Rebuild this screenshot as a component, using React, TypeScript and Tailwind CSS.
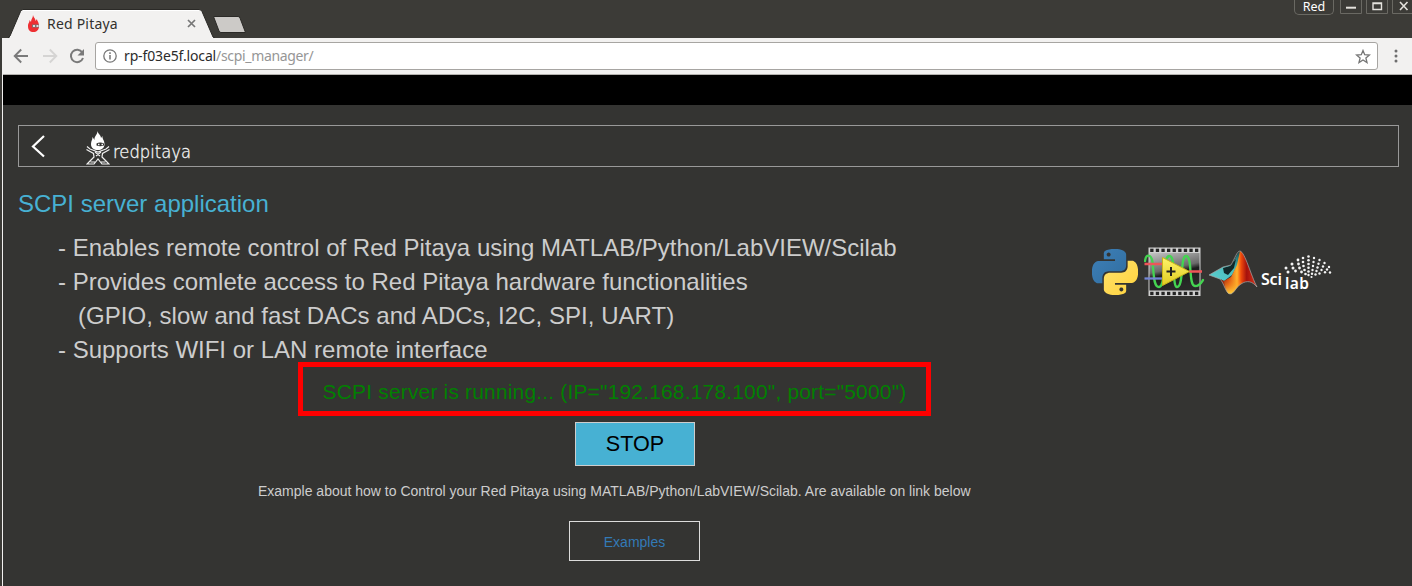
import React from "react";

const PY =
  "M14.25.18l.9.2.73.26.59.3.45.32.34.34.25.34.16.33.1.3.04.26.02.2-.01.13V8.5l-.05.63-.13.55-.21.46-.26.38-.3.31-.33.25-.35.19-.35.14-.33.1-.3.07-.26.04-.21.02H8.77l-.69.05-.59.14-.5.22-.41.27-.33.32-.27.35-.2.36-.15.37-.1.35-.07.32-.04.27-.02.21v3.06H3.17l-.21-.03-.28-.07-.32-.12-.35-.18-.36-.26-.36-.36-.35-.46-.32-.59-.28-.73-.21-.88-.14-1.05-.05-1.23.06-1.22.16-1.04.24-.87.32-.71.36-.57.4-.44.42-.33.42-.24.4-.16.36-.1.32-.05.24-.01h.16l.06.01h8.16v-.83H6.18l-.01-2.75-.02-.37.05-.34.11-.31.17-.28.25-.26.31-.23.38-.2.44-.18.51-.15.58-.12.64-.1.71-.06.77-.04.84-.02 1.27.05zm-6.3 1.98l-.23.33-.08.41.08.41.23.34.33.22.41.09.41-.09.33-.22.23-.34.08-.41-.08-.41-.23-.33-.33-.22-.41-.09-.41.09z";

function PythonLogo() {
  return (
    <svg className="mt-[2px] h-[46px] w-[46px] shrink-0" viewBox="0 0 24 24">
      <defs>
        <linearGradient id="pyb" x1="0" y1="0" x2="1" y2="1">
          <stop offset="0" stopColor="#3e80b8" />
          <stop offset="1" stopColor="#306d9f" />
        </linearGradient>
        <linearGradient id="pyy" x1="1" y1="1" x2="0" y2="0">
          <stop offset="0" stopColor="#ffe26c" />
          <stop offset="1" stopColor="#ffd23c" />
        </linearGradient>
      </defs>
      <path d={PY} fill="url(#pyb)" />
      <path d={PY} fill="url(#pyy)" transform="rotate(180 12 12)" />
    </svg>
  );
}

const HOLES = [0, 1, 2, 3, 4, 5, 6, 7, 8];

function LabviewLogo() {
  return (
    <svg className="ml-[6px] h-[50px] w-[61px] shrink-0" viewBox="0 0 61 50">
      <defs>
        <linearGradient id="film" x1="0" y1="0" x2="0.3" y2="1">
          <stop offset="0" stopColor="#c4c4c4" />
          <stop offset="0.5" stopColor="#6a6a6a" />
          <stop offset="0.62" stopColor="#1d1d1d" />
          <stop offset="1" stopColor="#292929" />
        </linearGradient>
        <linearGradient id="tri" x1="0" y1="0" x2="0" y2="1">
          <stop offset="0" stopColor="#fff36a" />
          <stop offset="1" stopColor="#e0cc20" />
        </linearGradient>
      </defs>
      <rect x="4.5" y="0.5" width="52" height="48.5" fill="#cfcfcf" />
      <rect x="5.5" y="6" width="50" height="37.5" fill="url(#film)" />
      {HOLES.map((i) => (
        <g key={i} fill="#242424">
          <rect x={6.2 + i * 5.6} y="1.7" width="3.3" height="3.3" />
          <rect x={6.2 + i * 5.6} y="44.8" width="3.3" height="3.3" />
        </g>
      ))}
      <path
        d="M1 14C2 7 7 6.500 8.500 15C10 25 9 40 15 40C22 40 18 9 25.500 9C32 9 28 40 33 40C40 40 36 9 42 9C49 9 44 39 51 39C56 39 57 36 59 33"
        fill="none"
        stroke="#44d451"
        strokeWidth="2.3"
        strokeLinecap="round"
      />
      <path d="M0.500 17H20M45 24.500H58" stroke="#ee5558" strokeWidth="2.3" />
      <path d="M0.500 31.500H19" stroke="#7385d4" strokeWidth="2.300" />
      <path d="M18.500 10.500L45.500 24.500L18.500 38.500Z" fill="url(#tri)" stroke="#c9b51a" />
      <path d="M22.500 24.500h9M27 20v9" stroke="#222" strokeWidth="2" />
    </svg>
  );
}

function MatlabLogo() {
  return (
    <svg className="ml-[3px] mt-[3px] h-[45px] w-[50px] shrink-0" viewBox="0 0 50 45">
      <defs>
        <linearGradient id="mw" x1="0" x2="1" y1="0" y2="0">
          <stop offset="0" stopColor="#711712" />
          <stop offset="0.22" stopColor="#d84a10" />
          <stop offset="0.46" stopColor="#ffb32c" />
          <stop offset="0.57" stopColor="#ef4b0c" />
          <stop offset="0.72" stopColor="#a5110c" />
          <stop offset="1" stopColor="#dc3518" />
        </linearGradient>
        <linearGradient id="my" x1="0" x2="0" y1="0" y2="1">
          <stop offset="0.3" stopColor="#ff8a1a" stopOpacity="0" />
          <stop offset="1" stopColor="#ffd43a" />
        </linearGradient>
        <linearGradient id="mt" x1="0" x2="1" y1="1" y2="0">
          <stop offset="0" stopColor="#5bd0d0" />
          <stop offset="0.6" stopColor="#49bcbc" />
          <stop offset="1" stopColor="#164c4e" />
        </linearGradient>
      </defs>
      <path d="M1 25L15 17L24 15L29 5L32 1L31 13L24 25L16 31L12 29Z" fill="url(#mt)" />
      <path d="M15 18L22 16L28 9L26 18L20 25L16 23Z" fill="#122829" />
      <path d="M12 29L16 31L23 27L29 15L32 1C37 2 43 26 49 37C44 31 39 30 33 34C28 37 26 44 22 44C18 44 16 33 12 29Z" fill="url(#mw)" />
      <path d="M16 31L24 26L29 22L34 33C28 37 26 44 22 44C18 44 17 36 16 31Z" fill="url(#my)" />
      <path d="M1 25L15 17L23 15C27 8 29 1 32 1C37 2 43 26 49 37C44 31 39 30 33 34C28 37 26 44 22 44C18 44 16 33 12 29Z" fill="none" stroke="#a8a8a8" strokeWidth="0.7" />
    </svg>
  );
}

const DOTS: number[][] = [
  [25, 13, 1.5], [27, 17, 1.5], [31, 9, 1.5], [32, 13, 1.5], [34.5, 16, 1.4],
  [37, 5, 1.4], [37.5, 9, 1.4], [38.5, 13, 1.4], [40.5, 17, 1.4],
  [42, 3, 1.3], [42, 7, 1.3], [42.5, 11, 1.3], [43.5, 15, 1.3], [44.5, 19, 1.3],
  [47.5, 1.5, 1.3], [47.5, 5.2, 1.3], [47.5, 9, 1.3], [47.5, 12.8, 1.3], [47.5, 16.5, 1.3], [47.5, 20, 1.2],
  [53, 3, 1.2], [52.5, 7, 1.2], [52, 11, 1.2], [51.5, 15, 1.2], [51, 18.8, 1.2], [50.5, 22, 1.1],
  [58.5, 5, 1.2], [57.5, 8.8, 1.2], [56.5, 12.5, 1.2], [55.5, 16, 1.2], [54.5, 19.5, 1.2],
  [63.5, 8, 1.2], [62, 11.5, 1.2], [60.5, 15, 1.2], [58.5, 18.5, 1.2],
  [68, 12, 1.2], [66, 14.5, 1.2], [69, 17.5, 1.2], [64, 17.3, 1.2],
];

function ScilabLogo() {
  return (
    <svg className="ml-[3px] mt-[8px] h-[38px] w-[72px] shrink-0 overflow-visible" viewBox="0 0 72 38">
      {DOTS.map(([x, y, r], i) => (
        <circle key={i} cx={x} cy={y} r={r} fill="#f4f4f4" />
      ))}
      <g fill="#fff" fontFamily="Noto Sans, sans-serif" fontWeight="600" fontSize="16">
        <text x="0" y="30" textLength="21" lengthAdjust="spacing">Sci</text>
        <text x="24" y="34" textLength="24" lengthAdjust="spacing" fontSize="15.5">lab</text>
      </g>
    </svg>
  );
}

function Mascot() {
  return (
    <svg className="h-[34px] w-[24px] shrink-0" viewBox="0 0 24 34">
      <path d="M11.500 0C12 3 15 4 15 7L16.500 5C16 8 18.500 9 18.500 13C18.500 17 15.500 19 12 19C8 19 5 17 5 13C5 10 6.500 9 6.500 6L8.500 9C8 5 11.500 4 11.500 0Z" fill="#fff" />
      <path d="M10.500 12.500Q14 10.500 18 12.500V14.500Q14 16 10.500 14.500Z" fill="#343432" />
      <path d="M12 13.500h1.500M15.500 13.500h1.500" stroke="#fff" strokeWidth="1.300" />
      <path
        d="M1 15.500L4 18L8 19.500L12 21L16 19.500L20 18L23 15.500M0.500 18.500L4 20.500L7.500 22.500L8 26L5 29L1 33H8L12 28L16 33H23L19 29L16 26L16.500 22.500L20 20.500L23.500 18.500M9 21L14 25M15 21L10 25M4.500 31H9M15 31H19.500"
        fill="none"
        stroke="#f0f0f0"
        strokeWidth="1.200"
      />
    </svg>
  );
}

function TabStrip() {
  return (
    <div className="flex h-[38px] items-start bg-[#3c3b37]">
      <div className="relative mt-[9px] ml-[8px] h-[29px] w-[207px]">
        <svg className="absolute inset-0 h-[29px] w-[207px]" viewBox="0 0 207 29">
          <path d="M0 29L2 27L12.500 2.500Q13.500 0.500 15 0.500H191Q193 0.500 194 2.500L205 28L207 29Z" fill="#f2f1f0" stroke="#2b2a27" />
          <path d="M2 28.500H205" stroke="#f2f1f0" />
          <path d="M15 1.500H191" stroke="#fff" />
        </svg>
        <div className="relative flex h-[29px] items-center pl-[19px]">
          <svg className="h-[17px] w-[13px]" viewBox="0 0 13 17">
            <path d="M6 0C6 2 8.500 3 8.500 6L10 4C10 6 12 7 12 11C12 15 9.500 17 6.500 17C3 17 1 15 1 11C1 8 2.500 8 2.500 5L4 7C4 4 6 3 6 0Z" fill="#ee3033" />
            <path d="M5 9.500H12V12.500H5Z" fill="#777" />
            <path d="M6 11h2M9.500 11h2" stroke="#fff" strokeWidth="1.600" />
          </svg>
          <span className="ml-[7px] w-[135px] font-['Noto_Sans',sans-serif] text-[14px] tracking-[0.2px] text-[#33312e]">Red Pitaya</span>
          <svg className="ml-[5px] h-[9px] w-[9px]" viewBox="0 0 9 9">
            <path d="M1 1L8 8M8 1L1 8" stroke="#777" strokeWidth="1.700" />
          </svg>
        </div>
      </div>
      <svg className="mt-[16px] -ml-[3px] h-[17px] w-[34px]" viewBox="0 0 34 17">
        <path d="M1.500 0.500H26Q27.500 0.500 28 2L33.500 16.500H9Q7.500 16.500 7 15Z" fill="#cccac7" stroke="#2b2a27" />
      </svg>
      <div className="ml-auto flex">
        <div className="h-[15px] w-[40px] rounded-b-[5px] border border-t-0 border-[#6a6963] text-center font-['Noto_Sans',sans-serif] text-[12.5px] leading-[14px] text-white">
          Red
        </div>
        <svg className="ml-[6px] h-[15px] w-[72px]" viewBox="0 0 72 15">
          <path d="M0.500 0V13.500H21.500V0M26.500 0V13.500H47.500V0M52.500 0V13.500H72" fill="none" stroke="#6a6963" />
          <path d="M6 7.700H16" stroke="#e4e2dd" strokeWidth="2" />
          <path d="M33 3H41.500V9.500H33ZM33 3.500H41.500" fill="none" stroke="#e4e2dd" strokeWidth="1.400" />
          <path d="M60 2L67.500 10M67.500 2L60 10" stroke="#e4e2dd" strokeWidth="1.600" />
        </svg>
      </div>
    </div>
  );
}

function Toolbar() {
  return (
    <div className="flex h-[37px] items-center border-b border-[#b3b1ae] bg-[#f2f1f0] pl-[10px]">
      <svg className="h-[16px] w-[16px]" viewBox="0 0 16 16" fill="none" stroke="#7a7a7a" strokeWidth="1.900">
        <path d="M15 8H2M8.200 1.500L1.700 8L8.200 14.500" />
      </svg>
      <svg className="ml-[13px] h-[16px] w-[16px]" viewBox="0 0 16 16" fill="none" stroke="#d5d4d3" strokeWidth="1.900">
        <path d="M1 8H14M7.800 1.500L14.300 8L7.800 14.500" />
      </svg>
      <svg className="ml-[11px] h-[16px] w-[16px]" viewBox="0 0 16 16">
        <path d="M13.300 4.500A6.200 6.200 0 1 0 14 10" fill="none" stroke="#7a7a7a" strokeWidth="2" />
        <path d="M15 1V7.500H8.500Z" fill="#7a7a7a" />
      </svg>
      <div className="ml-[10px] flex h-[28px] w-[1283px] items-center rounded-[3px] border border-[#a7a5a2] bg-white pr-[6px] pl-[7px] font-['Noto_Sans',sans-serif] text-[14px]">
        <svg className="mr-[7px] h-[14px] w-[14px]" viewBox="0 0 14 14" fill="none" stroke="#777">
          <circle cx="7" cy="7" r="6.200" strokeWidth="1.300" />
          <path d="M7 6V10.500M7 3.300V5" strokeWidth="1.500" />
        </svg>
        <span className="-mt-[1px] tracking-[-0.14px] text-[#2c2c2c]">rp-f03e5f.local</span>
        <span className="-mt-[1px] tracking-[-0.34px] text-[#969696]">/scpi_manager/</span>
        <svg className="ml-auto h-[15px] w-[16px]" viewBox="0 0 16 15">
          <path d="M8 1.500L9.700 5.700L14.500 6L10.900 9L12 13.500L8 11L4 13.500L5.100 9L1.500 6L6.300 5.700Z" fill="none" stroke="#757575" strokeWidth="1.300" />
        </svg>
      </div>
      <svg className="ml-[16px] h-[14px] w-[4px]" viewBox="0 0 4 14" fill="#6e6e6e">
        <circle cx="2" cy="2" r="1.500" />
        <circle cx="2" cy="7" r="1.500" />
        <circle cx="2" cy="12" r="1.500" />
      </svg>
    </div>
  );
}

export default function App() {
  return (
    <div className="flex h-[586px] w-[1412px] flex-col overflow-hidden bg-[#3c3b37] font-['Liberation_Sans',sans-serif]">
      <TabStrip />
      <div className="ml-[2px] flex-1 border-l border-[#f2f1f0] bg-[#343432]">
        <Toolbar />
        <div className="h-[30px] bg-black" />
        <main className="pt-[20px] pr-[13px] pl-[15px]">
          <header className="flex h-[42px] items-start border border-[#999]">
            <svg className="mt-[9px] ml-[12px] h-[23px] w-[15px]" viewBox="0 0 15 23">
              <path d="M13 1L2 11.500L13 21.500" fill="none" stroke="#fff" strokeWidth="2.200" />
            </svg>
            <div className="mt-[5px] ml-[40px] flex">
              <Mascot />
              <svg className="ml-[3px] h-[34px] w-[80px] overflow-visible" viewBox="0 0 80 34">
                <text x="0" y="27" textLength="78" lengthAdjust="spacingAndGlyphs" fill="#f4f4f4" stroke="#f4f4f4" strokeWidth="0.35" fontFamily="DejaVu Sans, sans-serif" fontWeight="200" fontSize="18.5">redpitaya</text>
              </svg>
            </div>
          </header>
          <div className="flex">
            <section className="w-[1074px]">
              <h1 className="mt-[20px] text-[24px] leading-[34px] text-[#47b1d3]">SCPI server application</h1>
              <div className="mt-[10px] pl-[40px] text-[24px] leading-[34px] whitespace-pre text-[#cdcdcd]">
                <p>- Enables remote control of Red Pitaya using MATLAB/Python/LabVIEW/Scilab</p>
                <p>- Provides comlete access to Red Pitaya hardware functionalities</p>
                <p className="pl-[20px] tracking-[0.035px]">(GPIO, slow and fast DACs and ADCs, I2C, SPI, UART)</p>
                <p>- Supports WIFI or LAN remote interface</p>
              </div>
              <div className="-mt-[5px] ml-[280px] flex h-[54px] w-[633px] items-center justify-center border-[5px] border-[#fe0000] text-[21px] tracking-[0.165px] whitespace-nowrap text-[#018001]">
                <span className="mt-[6px]">SCPI server is running... (IP="192.168.178.100", port="5000")</span>
              </div>
              <button className="mt-[6px] ml-[557px] flex h-[44px] w-[120px] items-center justify-center border border-[#cdcdcd] bg-[#47b1d3] text-[21.6px] text-black">STOP</button>
              <p className="mt-[15px] ml-[240px] text-[14px] leading-[20px] whitespace-nowrap text-[#cdcdcd]">
                Example about how to Control your Red Pitaya using MATLAB/Python/LabVIEW/Scilab. Are available on link below
              </p>
              <button className="mt-[20px] ml-[551px] flex h-[40px] w-[131px] items-center justify-center border border-[#dcdcdc] pt-[2px] text-[14px] text-[#337ab7]">Examples</button>
            </section>
            <div className="mt-[80px] flex items-start">
              <PythonLogo />
              <LabviewLogo />
              <MatlabLogo />
              <ScilabLogo />
            </div>
          </div>
        </main>
      </div>
    </div>
  );
}
